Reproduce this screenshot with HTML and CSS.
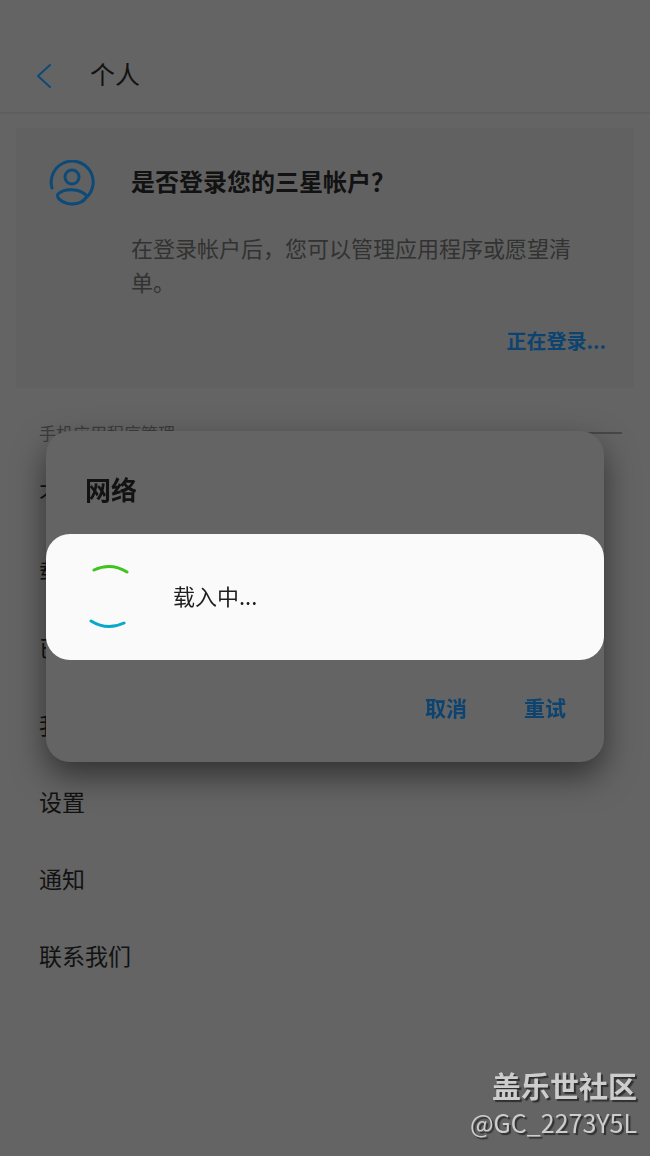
FILE: index.html
```html
<!DOCTYPE html>
<html lang="zh-CN">
<head>
<meta charset="utf-8">
<meta name="viewport" content="width=device-width, initial-scale=1">
<title>个人</title>
<link rel="stylesheet" href="styles.css">
</head>
<body>
<div class="page">
  <header class="topbar">
    <button class="back" type="button" aria-label="返回">
      <svg width="16" height="26" viewBox="0 0 16 26"><path d="M14 3 2 14l12 11" fill="none" stroke="currentColor" stroke-width="2" stroke-linecap="round" stroke-linejoin="round"/></svg>
    </button>
    <h1 class="title">个人</h1>
  </header>
  <main>
    <section class="card">
      <svg class="avatar" width="46" height="46" viewBox="0 0 46 46" fill="none" stroke="currentColor" stroke-width="3" stroke-linecap="round">
        <path d="M3 28A21 21 0 1 1 38 37"/>
        <circle cx="23" cy="17" r="7"/>
        <path d="M38 36C31 28 15 28 9 34C6 38 15 44 23 44S36 40 38 36"/>
      </svg>
      <div class="card-body">
        <h2 class="card-title">是否登录您的三星帐户&#xFF1F;</h2>
        <p class="card-text">在登录帐户后&#xFF0C;您可以管理应用程序或愿望清单。</p>
        <a class="card-link" href="#signin">正在登录...</a>
      </div>
    </section>
    <div class="section-head"><h3 class="section-title">手机应用程序管理</h3></div>
    <nav class="menu">
      <a class="item" href="#update">不</a>
      <a class="item" href="#download">载</a>
      <a class="item" href="#purchased">已</a>
      <a class="item" href="#mine">我</a>
      <a class="item" href="#settings">设置</a>
      <a class="item" href="#notice">通知</a>
      <a class="item" href="#contact">联系我们</a>
    </nav>
  </main>
</div>
<div class="overlay">
  <section class="dialog" role="dialog" aria-labelledby="net">
    <h2 class="dialog-title" id="net">网络</h2>
    <div class="actions">
      <button class="action" type="button">取消</button>
      <button class="action" type="button">重试</button>
    </div>
  </section>
</div>
<div class="overlay">
  <div class="loading" role="status">
    <svg width="46" height="66" viewBox="0 0 46 66" fill="none" stroke-width="3" stroke-linecap="round">
      <path d="M10 6Q27-2 43 8" stroke="#3fc41f"/>
      <path d="M7 57Q23 67 40 59" stroke="#06a9cb"/>
    </svg>
    <span class="loading-text">载入中...</span>
  </div>
</div>
<footer class="mark">
  <strong class="mark-name">盖乐世社区</strong>
  <span class="mark-user">@GC_2273Y5L</span>
</footer>
</body>
</html>
```
FILE: styles.css
```css
* { box-sizing: border-box; }
body {
  margin: 0;
  background: #646464;
  color: #121212;
  font-family: "Noto Sans CJK SC", sans-serif;
}
h1, h2, h3, p { margin: 0; font-weight: 400; }
button { border: 0; padding: 0; background: none; font: inherit; color: inherit; }
a { color: inherit; text-decoration: none; }
.page { min-height: 100vh; }
.topbar {
  display: flex;
  align-items: center;
  gap: 38px;
  height: 114px;
  padding: 38px 36px 0;
  border-bottom: 2px solid #5e5e5e;
}
.back { display: flex; color: #0c4a78; }
.title { padding-bottom: 4px; font-size: 25px; line-height: 36px; }
.card {
  display: flex;
  align-items: flex-start;
  gap: 36px;
  margin: 14px 16px 0;
  padding: 32px 28px 30px 33px;
  background: #616161;
}
.avatar { flex: none; color: #0c4a78; }
.card-body { flex: 1; display: flex; flex-direction: column; }
.card-title { font-size: 24px; line-height: 42px; font-weight: 700; }
.card-text { margin-top: 28px; padding-right: 26px; font-size: 22px; line-height: 34px; color: #323232; }
.card-link {
  align-self: flex-end;
  margin-top: 26px;
  font-size: 20px;
  line-height: 34px;
  font-weight: 700;
  color: #0c4370;
}
.section-head {
  display: flex;
  align-items: center;
  gap: 16px;
  margin: 32px 28px 0 39px;
  color: #3c3c3c;
}
.section-head::after { content: ""; flex: 1; height: 2px; background: #484848; }
.section-title { font-size: 17px; line-height: 26px; }
.menu { display: flex; flex-direction: column; padding: 9px 39px 0; }
.item { padding: 21px 0; font-size: 23px; line-height: 35px; }
.overlay {
  position: fixed;
  inset: 0;
  display: flex;
  align-items: center;
  padding: 37px 46px 0;
}
.dialog, .loading { flex: 1; border-radius: 24px; }
.dialog {
  display: flex;
  flex-direction: column;
  gap: 180px;
  padding: 39px 38px 36px 39px;
  background: #646464;
  box-shadow: 0 14px 32px rgba(0, 0, 0, 0.5);
}
.dialog-title { font-size: 26px; line-height: 38px; font-weight: 700; }
.actions { display: flex; justify-content: flex-end; gap: 57px; }
.action { font-size: 21px; line-height: 38px; font-weight: 700; color: #0c4370; }
.loading {
  display: flex;
  align-items: center;
  gap: 43px;
  padding: 30px 38px;
  background: #fafafa;
  color: #1e1e1e;
}
.loading-text { padding-bottom: 4px; font-size: 22px; line-height: 34px; }
.mark {
  position: fixed;
  right: 13px;
  bottom: 16px;
  display: flex;
  flex-direction: column;
  align-items: flex-end;
  color: #cdcdcd;
  text-shadow: 2px 2px 1px #303030;
}
.mark-name { font-size: 29px; line-height: 38px; }
.mark-user { font-size: 25px; line-height: 36px; }
```
